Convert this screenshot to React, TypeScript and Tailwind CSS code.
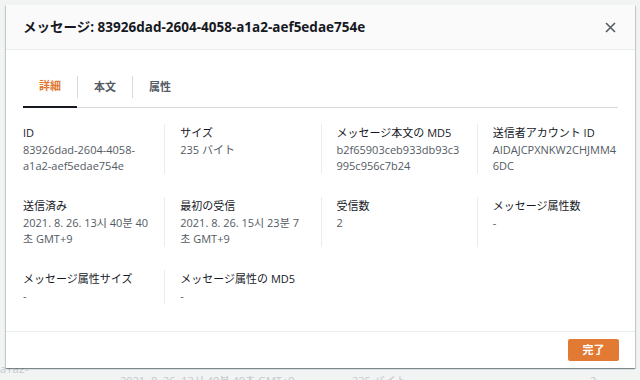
import React, { useState } from 'react';

const FONT = { fontFamily: '"Open Sans", "Noto Sans CJK JP", "Noto Sans CJK KR", sans-serif' };

type Field = { label: string; value: string };

const rows: Field[][] = [
  [
    { label: 'ID', value: '83926dad-2604-4058-a1a2-aef5edae754e' },
    { label: 'サイズ', value: '235 バイト' },
    { label: 'メッセージ本文の MD5', value: 'b2f65903ceb933db93c3995c956c7b24' },
    { label: '送信者アカウント ID', value: 'AIDAJCPXNKW2CHJMM46DC' },
  ],
  [
    { label: '送信済み', value: '2021. 8. 26. 13시 40분 40초 GMT+9' },
    { label: '最初の受信', value: '2021. 8. 26. 15시 23분 7초 GMT+9' },
    { label: '受信数', value: '2' },
    { label: 'メッセージ属性数', value: '-' },
  ],
  [
    { label: 'メッセージ属性サイズ', value: '-' },
    { label: 'メッセージ属性の MD5', value: '-' },
  ],
];

const tabs = ['詳細', '本文', '属性'];

const App: React.FC = () => {
  const [active, setActive] = useState(0);

  return (
    <div className="relative h-[380px] w-[640px] overflow-hidden bg-[#f2f3f3]" style={FONT}>
      {/* dimmed table behind the dialog */}
      <div className="flex h-full flex-col justify-end text-[11px] text-[#c4c8cb]">
        <div className="flex h-[18px] items-start pt-[11px]">
          <div className="-mt-[12px] w-[120px] leading-[16px]">a1a2-</div>
          <div className="w-[232px] leading-[16px]">2021. 8. 26. 13시 40분 40초 GMT+9</div>
          <div className="w-[238px] leading-[16px]">235 バイト</div>
          <div className="leading-[16px]">2</div>
        </div>
      </div>

      {/* dialog */}
      <div className="absolute left-[6px] top-[5px] w-[629px] bg-white shadow-[0_1px_1px_0_rgba(0,28,36,0.3),1px_1px_1px_0_rgba(0,28,36,0.15),-1px_1px_1px_0_rgba(0,28,36,0.15)]">
        <div className="flex h-[45px] items-center justify-between border-b border-[#eaeded] bg-[#fafafa] pl-[17px] pr-[17px]">
          <h2 className="text-[13.5px] font-bold text-[#16191f]">
            メッセージ: 83926dad-2604-4058-a1a2-aef5edae754e
          </h2>
          <button className="flex h-[16px] w-[16px] items-center justify-center">
            <svg width="11" height="11" viewBox="0 0 11 11" fill="none" stroke="#545b64" strokeWidth="1.6">
              <path d="M1 1 L10 10 M10 1 L1 10" />
            </svg>
          </button>
        </div>

        <div className="px-[17px] pb-[27px] pt-[17px]">
          <div className="flex items-center border-b border-[#d5dbdb]">
            {tabs.map((t, i) => (
              <React.Fragment key={t}>
                {i > 0 && <span className="h-[22px] w-px bg-[#d5dbdb]" />}
                <button
                  onClick={() => setActive(i)}
                  className={`h-[40px] px-[16px] text-[11px] font-bold ${
                    active === i
                      ? '-mb-px border-b-2 border-[#16191f] text-[#e07a35]'
                      : 'text-[#545b64]'
                  }`}
                >
                  {t}
                </button>
              </React.Fragment>
            ))}
          </div>

          <div className="-mx-[15px] mt-[16px] flex flex-col gap-[23px]">
            {rows.map((row, ri) => (
              <div key={ri} className="grid grid-cols-4">
                {row.map((f, ci) => (
                  <div
                    key={f.label}
                    className={`px-[15px] ${ci > 0 ? 'border-l border-[#eaeded]' : ''}`}
                  >
                    <div className="text-[11px] leading-[18px] text-[#16191f]">{f.label}</div>
                    <div className="break-words text-[11px] leading-[16px] text-[#545b64]">{f.value}</div>
                  </div>
                ))}
              </div>
            ))}
          </div>
        </div>

        <div className="flex justify-end border-t border-[#eaeded] px-[16px] py-[7px]">
          <button className="h-[22px] w-[51px] rounded-[2px] bg-[#e27a34] text-[11px] font-bold text-white">
            完了
          </button>
        </div>
      </div>
    </div>
  );
};

export default App;
